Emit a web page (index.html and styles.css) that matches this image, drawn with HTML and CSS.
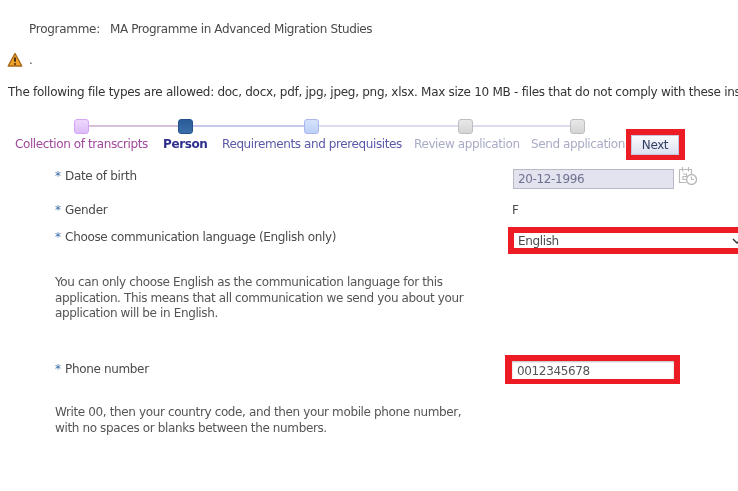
FILE: index.html
```html
<!DOCTYPE html>
<html lang="en">
<head>
<meta charset="utf-8">
<title>Application</title>
<link rel="stylesheet" href="styles.css">
</head>
<body>
<div class="page">
  <p class="programme"><span class="programme-label">Programme:</span><span class="programme-value">MA Programme in Advanced Migration Studies</span></p>
  <p class="warning">
    <svg class="warn-icon" width="16" height="16" viewBox="0 0 16 16"><path d="M8 1.5 L14.8 14 H1.2 Z" fill="#f0a428" stroke="#a8681a" stroke-width="1.4" stroke-linejoin="round"/><path d="M8 5.5 V9.8" stroke="#4a3010" stroke-width="2"/><circle cx="8" cy="12" r="1.1" fill="#4a3010"/></svg>
    <span>.</span>
  </p>
  <p class="filetypes">The following file types are allowed: doc, docx, pdf, jpg, jpeg, png, xlsx. Max size 10 MB - files that do not comply with these ins</p>

  <div class="track">
    <span class="node node-done"></span><span class="line line-a"></span>
    <span class="node node-current"></span><span class="line line-b"></span>
    <span class="node node-next"></span><span class="line line-c"></span>
    <span class="node node-off"></span><span class="line line-d"></span>
    <span class="node node-off"></span>
  </div>
  <div class="steps">
    <span class="step step-done">Collection of transcripts</span>
    <span class="step step-current">Person</span>
    <span class="step step-next">Requirements and prerequisites</span>
    <span class="step step-off step-review">Review application</span>
    <span class="step step-off step-send">Send application</span>
    <span class="mark mark-next"><button class="next" type="button">Next</button></span>
  </div>

  <div class="form">
    <div class="row row-dob">
      <div class="label"><span class="star">*</span> Date of birth</div>
      <div class="field">
        <span class="date">20-12-1996</span>
        <svg class="cal" width="20" height="20" viewBox="0 0 20 20" fill="none" stroke="#b9b9b9" stroke-width="1.1"><path d="M1.5 3.5 H13.5 V9 M1.5 3.5 V16.5 H8" /><path d="M4.5 1 V5.5 M10.5 1 V5.5"/><path d="M5 8 H8.5 V10.5 H5 V13.5 H8.5"/><circle cx="13.5" cy="13.5" r="5" fill="#fff" stroke-width="1.4"/><path d="M13.5 10.5 V13.5 H16"/></svg>
      </div>
    </div>
    <div class="row row-gender">
      <div class="label"><span class="star">*</span> Gender</div>
      <div class="field plain">F</div>
    </div>
    <div class="row row-lang">
      <div class="label label-lang"><span class="star">*</span> Choose communication language (English only)</div>
      <div class="field">
        <div class="mark mark-lang"><span class="select">English<svg class="chev" width="10" height="6" viewBox="0 0 10 6" fill="none" stroke="#333" stroke-width="1.4"><path d="M1 1 L5 5 L9 1"/></svg></span></div>
      </div>
    </div>
    <p class="help help-lang">You can only choose English as the communication language for this application. This means that all communication we send you about your application will be in English.</p>
    <div class="row row-phone">
      <div class="label"><span class="star">*</span> Phone number</div>
      <div class="field">
        <div class="mark mark-phone"><span class="input">0012345678</span></div>
      </div>
    </div>
    <p class="help help-phone">Write 00, then your country code, and then your mobile phone number, with no spaces or blanks between the numbers.</p>
  </div>
</div>
</body>
</html>
```
FILE: styles.css
```css
html, body { margin: 0; padding: 0; background: #fff; }
body { width: 738px; height: 491px; overflow: hidden; }
.page {
  font-family: "DejaVu Sans", sans-serif;
  font-size: 12px;
  letter-spacing: -0.28px;
  color: #4a4a4a;
  padding-top: 21px;
  white-space: nowrap;
  filter: blur(0.35px);
}
p { margin: 0; }
.programme { padding-left: 29px; line-height: 16px; display: flex; gap: 10px; }
.programme-value { letter-spacing: -0.39px; }
.warning { margin-top: 14px; padding-left: 7px; height: 18px; display: flex; align-items: center; gap: 6px; }
.warn-icon { display: block; }
.filetypes { margin-top: 15px; padding-left: 8px; line-height: 16px; color: #333; }

.track { display: flex; align-items: center; margin-top: 18px; padding-left: 74px; height: 16px; }
.node { width: 13px; height: 13px; border-radius: 3px; border: 1px solid; flex: none; }
.node-done { background: linear-gradient(#eed8ff, #dcbcf6); border-color: #d3a6f5; }
.node-current { background: linear-gradient(#2b5c9a, #3a6ea8); border-color: #23508c; }
.node-next { background: linear-gradient(#d6e2fb, #bcd0f6); border-color: #a9b6f0; }
.node-off { background: linear-gradient(#e8e8e8, #d4d4d4); border-color: #bdbdc4; }
.line { height: 2px; flex: none; }
.line-a { width: 89px; background: #d9bfd9; }
.line-b { width: 111px; background: #c8c8ee; }
.line-c { width: 139px; background: #dcdcec; }
.line-d { width: 97px; background: #dcdcec; }

.steps { display: flex; align-items: center; margin-top: -1px; padding-left: 15px; height: 22px; letter-spacing: -0.4px; }
.step { flex: none; }
.step-done { color: #a0489c; width: 148px; }
.step-current { color: #2e2e8e; font-weight: 700; width: 59px; }
.step-next { color: #5a58a8; width: 192px; }
.step-off { color: #a9abc6; }
.step-review { width: 117px; }
.step-send { width: 95px; }

.mark { border: 6px solid #ed1c24; box-sizing: border-box; }
.mark-next { width: 59px; height: 31px; border-width: 6px 6px 5px 5px; display: flex; }
.next {
  width: 100%; height: 100%; margin: 0; padding: 0; box-sizing: border-box;
  border: 1px solid #c5c8dc;
  background: linear-gradient(#fafbff, #dde0ef);
  font: inherit; letter-spacing: inherit; color: #2f3f63;
}

.form { margin-top: 4px; padding-left: 55px; }
.row { display: grid; grid-template-columns: 450px 1fr; align-items: center; letter-spacing: -0.35px; }
.star { color: #3a6ea8; margin-right: 1px; }
.field { display: flex; align-items: center; }
.row-dob { height: 34px; }
.date {
  box-sizing: border-box; width: 161px; height: 20px; margin: 6px 0 0 8px; padding-left: 4px;
  background: #e2e3ee; border: 1px solid #b8bac8; color: #6e7290; line-height: 18px;
}
.cal { margin-left: 4px; }
.row-gender { height: 34px; }
.plain { padding-left: 7px; }
.row-lang { height: 27px; align-items: start; }
.label-lang { margin-top: 3px; }
.mark-lang { margin-left: 3px; width: 240px; height: 27px; border-width: 6px; flex: none; }
.select { display: flex; align-items: center; justify-content: space-between; height: 100%; padding: 0 0 0 4px; }
.help { line-height: 15.5px; white-space: normal; width: 420px; color: #555; letter-spacing: -0.37px; }
.help-lang { margin-top: 21px; }
.row-phone { margin-top: 33px; height: 29px; }
.mark-phone { width: 175px; height: 29px; flex: none; border-width: 6px 6px 5px 7px; }
.input { display: block; box-sizing: border-box; height: 100%; padding-left: 5px; line-height: 20px; box-shadow: inset 0 1px 2px #bbb; color: #555; }
.help-phone { margin-top: 20px; line-height: 16px; }
```
